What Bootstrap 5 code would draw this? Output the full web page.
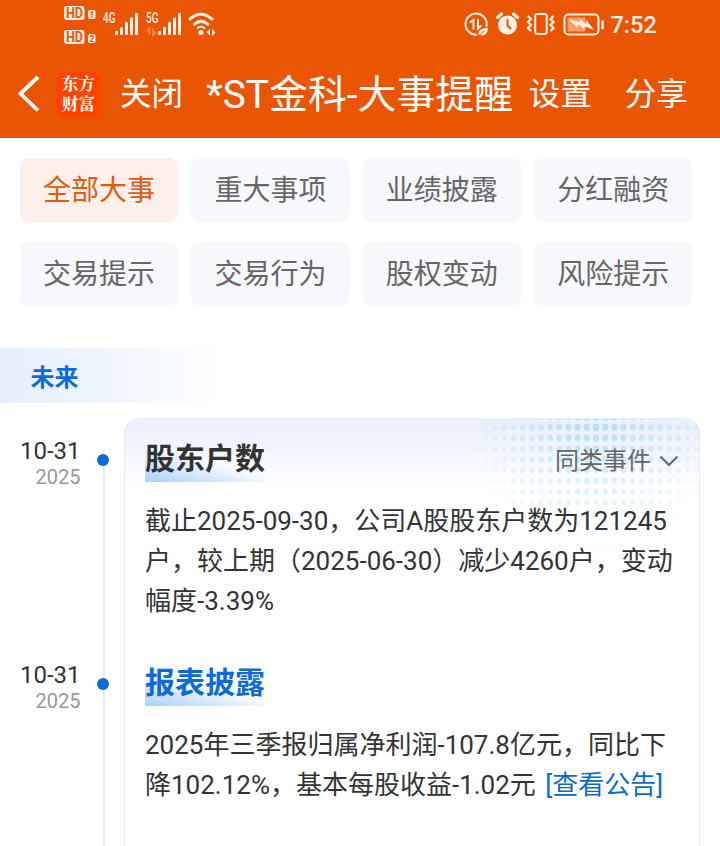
<!DOCTYPE html>
<html lang="zh-CN">
<head>
<meta charset="utf-8">
<meta name="viewport" content="width=device-width, initial-scale=1">
<title>*ST金科-大事提醒</title>
<link href="https://cdn.jsdelivr.net/npm/bootstrap@5.3.0/dist/css/bootstrap.min.css" rel="stylesheet">
<style>
body{font-family:Roboto,"Noto Sans CJK SC",sans-serif;color:#333;background:#fff;overflow:hidden;height:846px}
.app-head{background:#ea5504;color:#fff;height:138px}
.status-row{height:50px;padding-left:63px;padding-right:64px}
.status-row svg{display:block;flex:none}
.clock{font-size:23.5px;font-weight:500;line-height:50px;color:#fff0e4;margin-left:5.5px;width:45.5px;white-space:nowrap}
.title-row{height:88px;padding-left:17px}
.app-logo{width:45px;height:45px;border-radius:9px;background:#ff4200;font:700 16.500px/20px "Noto Serif CJK SC","Noto Sans CJK SC",sans-serif;margin-left:16px;padding-top:1px}
.app-logo span{display:block;height:20px}
.head-link{font-size:31.5px;line-height:44px;white-space:nowrap;padding-top:2px}
.head-title{font-size:38.9px;line-height:50px;white-space:nowrap;font-weight:400;padding-top:2px}
.gap-logo{margin-left:19px}.gap-title{margin-left:23px}.gap-set{margin-left:15.5px}.gap-share{margin-left:33px}
.tab-grid{display:grid;grid-template-columns:repeat(4,158px);column-gap:13.4px;row-gap:20px;padding:20px 0 0 20px}
.tab-grid .btn{height:64px;border:0;border-radius:8px;background:#f7f8fb;color:#666;font-size:28px;line-height:62px;padding:2px 0 0}
.tab-grid .btn.active{background:#fdf0ea;color:#e05a10}
.section-tag{height:55px;margin-top:42px;padding-left:30.5px;font-size:24px;font-weight:700;line-height:60px;color:#0d6bd8;background:linear-gradient(90deg,#e5effb 0,#edf4fd 90px,#fff 225px)}
.timeline{margin-top:15px;height:428px}
.dates{width:124px;position:relative}
.rail{position:absolute;left:103px;top:42px;bottom:0;width:2px;background:#ebebee}
.date-item{height:224px;padding-top:18px}
.date-item .day{font-size:24px;line-height:30px;width:80.5px;text-align:right}
.date-item .yr{font-size:20px;line-height:22px;width:80.5px;text-align:right;color:#999}
.dot{position:absolute;left:97px;width:12px;height:12px;border-radius:50%;background:#0d6cdb}
.dot-1{top:36px}.dot-2{top:260px}
.event-card{width:576px;border:1px solid #e2edf2;border-top-color:#e8f1fb;border-bottom:0;border-radius:16px 16px 0 0;background:linear-gradient(#e8f0fb,#f3f7fe 36px,#fff 68px);position:relative;overflow:hidden;padding:0 20px}
.halftone{position:absolute;right:0;top:0}
.event{position:relative;padding-top:23px}
.event-1{height:224px}
.ev-title{font-size:30px;font-weight:700;line-height:33px;height:40px;color:#333;background:linear-gradient(14deg,#a9d0fd 0,#c9e0fd 20%,rgba(255,255,255,0) 52%)}
.ev-title.linked{color:#0d6bd8}
.same-type{font-size:24px;line-height:36px;height:38px;color:#666}
.ev-text{font-size:26px;line-height:40px;margin:19px -10px 0 0;white-space:nowrap}
.ev-text a{color:#0d6bc8;text-decoration:none;margin-left:3px}
</style>
<script src="https://cdn.jsdelivr.net/npm/bootstrap@5.3.0/dist/js/bootstrap.bundle.min.js"></script>
</head>
<body>
<header class="app-head">
  <div class="status-row d-flex align-items-center justify-content-between">
    <svg width="155" height="50" viewBox="63 0 155 50" fill="#fff0e4">
      <rect x="64" y="6" width="20.500" height="14" rx="3"/><rect x="64" y="30" width="20.500" height="14" rx="3"/>
      <rect x="88" y="10" width="7.500" height="9" rx="2"/><rect x="88" y="34" width="7.500" height="9" rx="2"/>
      <g font-family="Roboto,sans-serif" font-weight="700" fill="#ea5504"><text x="66" y="17.800" font-size="14" textLength="17" lengthAdjust="spacingAndGlyphs">HD</text><text x="66" y="41.800" font-size="14" textLength="17" lengthAdjust="spacingAndGlyphs">HD</text><text x="89.300" y="17.800" font-size="9">1</text><text x="89.300" y="41.800" font-size="9">2</text></g>
      <g font-family="Roboto,sans-serif" font-weight="500" font-size="14"><text x="103" y="22.800" textLength="12.500" lengthAdjust="spacingAndGlyphs">4G</text><text x="146" y="22.800" textLength="12.500" lengthAdjust="spacingAndGlyphs">5G</text></g>
      <g id="sig"><rect x="115" y="31" width="3" height="4" rx="1"/><rect x="120" y="27" width="3" height="8" rx="1"/><rect x="125" y="22" width="3" height="13" rx="1"/><rect x="130" y="17.500" width="3" height="17.500" rx="1"/><rect x="135" y="13" width="3" height="22" rx="1"/></g>
      <use href="#sig" x="43"/>
      <path d="M149.500 35v-7l-3 3M153 28v7l3-3" fill="none" stroke="#ff8a4d" stroke-width="1.700"/>
      <g fill="none" stroke="#fff0e4" stroke-width="3" stroke-linecap="round"><path d="M190 19Q201 9.500 212 19M194.500 24.300Q201 18.500 208 24.300"/><path d="M197.700 28q3.300-2.400 6.600 0" stroke-width="2"/></g>
      <circle cx="201" cy="32.500" r="2.600"/><path d="M210 29v6.500l-3.500-3.500zM212 36v-7l3.500 3.500z"/>
    </svg>
    <div class="d-flex align-items-center">
      <svg width="142" height="50" viewBox="463 0 142 50" fill="none" stroke="#fff0e4" stroke-width="2">
        <path d="M486.300 27A10.600 10.600 0 1 0 477 34.700"/><path d="M470 22.500l3.500-2.500v9.500M481.500 25.500l-3.500 3v-9.500" stroke-width="2"/>
        <path d="M478.500 35c-.5-5 3-7 9.300-7 0 5.500-2.500 8.500-8 7z" fill="#fff0e4" stroke="none"/><path d="M479 35.500l5-4.500" stroke="#ea5504" stroke-width="1"/>
        <circle cx="507.500" cy="25" r="9.600" fill="#fff0e4" stroke="none"/><path d="M507.500 19v6.500l3.500 3.500" stroke="#ea5504"/>
        <path d="M497.500 17.500l4-3.500M517.500 17.500l-4-3.500" stroke-width="3.200" stroke-linecap="round"/>
        <rect x="535.200" y="14" width="11.500" height="20" rx="2"/>
        <path d="M528 16l3 3-3 3 3 3-3 3 3 3M553.500 16l-3 3 3 3-3 3 3 3-3 3" stroke-width="2.300"/>
        <rect x="564.500" y="14.500" width="34" height="20" rx="4"/><rect x="567.500" y="17.500" width="18" height="14" rx="1" fill="#fa9c6b" stroke="none"/>
        <path d="M568.500 19l11 3 1-3 5 5 1-4 7.500 10-9-3.500-1 3-5-5-2 3z" fill="#fff0e4" stroke="none"/><path d="M602.500 20.500v8.500" stroke-width="2.600"/>
      </svg>
      <span class="clock">7:52</span>
    </div>
  </div>
  <nav class="title-row d-flex align-items-center">
    <svg width="23" height="40" viewBox="0 0 23 40" fill="none" stroke="#fff" stroke-width="3.800"><path d="M21 3L3.500 19.500 21 36.500"/></svg>
    <div class="app-logo text-center flex-shrink-0"><span>东方</span><span>财富</span></div>
    <span class="head-link gap-logo">关闭</span>
    <h1 class="head-title mb-0 gap-title">*ST金科-大事提醒</h1>
    <span class="head-link gap-set">设置</span>
    <span class="head-link gap-share">分享</span>
  </nav>
</header>
<main>
  <div class="tab-grid">
    <button class="btn active">全部大事</button><button class="btn">重大事项</button><button class="btn">业绩披露</button><button class="btn">分红融资</button>
    <button class="btn">交易提示</button><button class="btn">交易行为</button><button class="btn">股权变动</button><button class="btn">风险提示</button>
  </div>
  <div class="section-tag">未来</div>
  <div class="timeline d-flex">
    <div class="dates flex-shrink-0">
      <div class="rail"></div>
      <div class="date-item"><div class="day">10-31</div><div class="yr">2025</div><i class="dot dot-1"></i></div>
      <div class="date-item"><div class="day">10-31</div><div class="yr">2025</div><i class="dot dot-2"></i></div>
    </div>
    <div class="event-card">
      <svg class="halftone" id="halftone" width="240" height="150" viewBox="459 419 240 150"></svg>
      <section class="event event-1">
        <div class="d-flex justify-content-between">
          <h2 class="ev-title mb-0">股东户数</h2>
          <div class="same-type d-flex align-items-center">同类事件<svg class="ms-2" width="20" height="14" viewBox="0 0 20 14" fill="none" stroke="#666" stroke-width="2"><path d="M1.500 2.500L10 11l8.500-8.500"/></svg></div>
        </div>
        <p class="ev-text">截止2025-09-30，公司A股股东户数为121245<br>户，较上期（2025-06-30）减少4260户，变动<br>幅度-3.39%</p>
      </section>
      <section class="event">
        <div class="d-flex"><h2 class="ev-title linked mb-0">报表披露</h2></div>
        <p class="ev-text">2025年三季报归属净利润-107.8亿元，同比下<br>降102.12%，基本每股收益-1.02元 <a href="#">[查看公告]</a></p>
      </section>
    </div>
  </div>
</main>
<script>
// Halftone dots fade and shrink away from the top centre of the pattern
const box = document.getElementById('halftone');
let dots = '';
for (let r = 0; r < 13; r++) for (let c = -13; c <= 11; c++) {
  const x = 596 + c * 9.17, y = 416.7 + r * 10.67;
  const d = Math.hypot((x - 596) / 135, (y - 417) / 150);
  if (d >= 1) continue;
  const k = 1 - d;
  dots += `<ellipse cx="${x}" cy="${y}" rx="${1.9 + 1.5 * k}" ry="${2.2 + 1.7 * k}" fill="hsl(${207 - r * 2} 85% 82%)" opacity="${(0.85 * k).toFixed(2)}"/>`;
}
box.innerHTML = dots;
</script>
</body>
</html>
